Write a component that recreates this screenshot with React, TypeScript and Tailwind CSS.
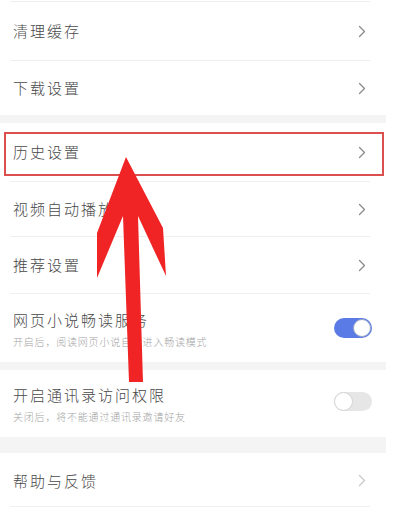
import React from "react";

const FONT = { fontFamily: '"Noto Sans CJK SC", "Noto Sans", sans-serif' };

function Chevron({ faint = false }: { faint?: boolean }) {
  return (
    <svg width="8" height="13" viewBox="0 0 8 13" className="shrink-0">
      <path
        d="M1.5 1.5 L6.5 6.5 L1.5 11.5"
        fill="none"
        stroke={faint ? "#c8c8c8" : "#8a8a8a"}
        strokeWidth="1.3"
        strokeLinecap="round"
        strokeLinejoin="round"
      />
    </svg>
  );
}

function Divider() {
  return <div className="ml-[10px] mr-[16px] h-px bg-[#efefef]" />;
}

function Band({ h }: { h: string }) {
  return <div className={`${h} bg-[#f4f4f4]`} />;
}

function NavRow({ label, h, faint }: { label: string; h: string; faint?: boolean }) {
  return (
    <div className={`${h} flex items-center justify-between pl-[13px] pr-[20px]`}>
      <span className="text-[15px] font-light tracking-[2px] text-[#484848] leading-[20px]">{label}</span>
      <Chevron faint={faint} />
    </div>
  );
}

function Toggle({ on }: { on: boolean }) {
  return on ? (
    <div className="w-[38px] h-[20px] rounded-full bg-[#5a7be6] flex items-center justify-end pr-px shrink-0">
      <div className="w-[18px] h-[18px] rounded-full bg-white border border-[#9aa6c8]" />
    </div>
  ) : (
    <div className="w-[38px] h-[19px] rounded-full bg-[#e6e6e6] flex items-center justify-start shrink-0">
      <div className="w-[19px] h-[19px] rounded-full bg-white border border-[#d4d4d4]" />
    </div>
  );
}

function ToggleRow({
  title,
  sub,
  on,
  h,
  pt,
  tmt,
}: {
  title: string;
  sub: string;
  on: boolean;
  h: string;
  pt: string;
  tmt: string;
}) {
  return (
    <div className={`${h} ${pt} flex items-start justify-between pl-[13px] pr-[14px]`}>
      <div className="flex flex-col">
        <span className="text-[15px] font-light tracking-[2px] text-[#484848] leading-[20px]">{title}</span>
        <span className="mt-[5px] text-[10px] font-light tracking-[0.8px] text-[#a4a4a4] leading-[14px]">{sub}</span>
      </div>
      <div className={tmt}>
        <Toggle on={on} />
      </div>
    </div>
  );
}

export default function App() {
  return (
    <div className="relative w-[400px] h-[517px] bg-white overflow-hidden" style={FONT}>
      <div className="w-[386px] pt-px">
        <Divider />
        <NavRow label="清理缓存" h="h-[58px]" />
        <Divider />
        <NavRow label="下载设置" h="h-[54px]" />
        <Band h="h-[8px]" />
        <NavRow label="历史设置" h="h-[58px]" />
        <Divider />
        <NavRow label="视频自动播放" h="h-[54px]" />
        <Divider />
        <NavRow label="推荐设置" h="h-[56px]" />
        <Divider />
        <ToggleRow
          title="网页小说畅读服务"
          sub="开启后，阅读网页小说自动进入畅读模式"
          on
          h="h-[68px]"
          pt="pt-[16px]"
          tmt="mt-[8px]"
        />
        <Band h="h-[8px]" />
        <ToggleRow
          title="开启通讯录访问权限"
          sub="关闭后，将不能通过通讯录邀请好友"
          on={false}
          h="h-[67px]"
          pt="pt-[15px]"
          tmt="mt-[7px]"
        />
        <Band h="h-[16px]" />
        <div className="pt-[2px]">
          <NavRow label="帮助与反馈" h="h-[51px]" faint />
        </div>
        <Divider />
      </div>

      {/* annotation: red highlight box */}
      <div className="absolute left-[4px] top-[132px] w-[380px] h-[44px] border-2 border-[#dc4f4f] pointer-events-none" />

      {/* annotation: red arrow */}
      <svg className="absolute left-0 top-0 pointer-events-none" width="400" height="517" viewBox="0 0 400 517">
        <polygon
          points="126,157 163,228 166,276 138,216 143,382 129,382 123,216 97,278 97,233"
          fill="#f02424"
        />
      </svg>
    </div>
  );
}
